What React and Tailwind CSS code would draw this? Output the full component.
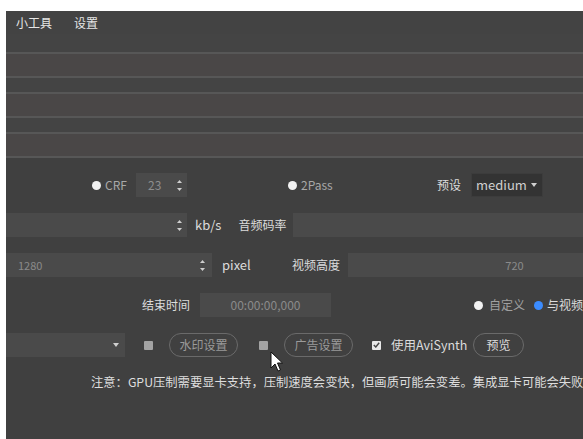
import React from "react";

const Spin = () => (
  <div className="flex flex-col gap-[5px] items-center">
    <svg width="5" height="3" viewBox="0 0 5 3">
      <path d="M0 3 L2.5 0 L5 3 Z" fill="#cfcfcf" />
    </svg>
    <svg width="5" height="3" viewBox="0 0 5 3">
      <path d="M0 0 L2.5 3 L5 0 Z" fill="#cfcfcf" />
    </svg>
  </div>
);

const Caret = () => (
  <svg width="6" height="4" viewBox="0 0 6 4">
    <path d="M0 0 L3 4 L6 0 Z" fill="#cfcfcf" />
  </svg>
);

const Dot = ({ blue, className = "" }) => (
  <span
    className={`shrink-0 w-[9px] h-[9px] rounded-full ${
      blue ? "bg-[#3b8cff]" : "bg-[#f2f2f2]"
    } ${className}`}
  />
);

const PillBtn = ({ children, className = "", light }) => (
  <button
    className={`shrink-0 h-6 rounded-full border border-[#6a6a6a] text-[12px] flex items-center justify-center ${
      light ? "text-[#dcdcdc]" : "text-[#9a9a9a]"
    } ${className}`}
  >
    {children}
  </button>
);

const Stripe = ({ h, light }) => (
  <>
    <div className={`${h} ${light ? "bg-[#4a4747]" : "bg-[#444444]"}`} />
    <div className="h-[2px] bg-[#575757]" />
  </>
);

export default function App() {
  return (
    <div className="bg-white h-[439px] w-[583px] pt-[11px] pl-[6px] font-['Noto_Sans_CJK_SC','Liberation_Sans',sans-serif] overflow-hidden">
      <div className="relative h-[428px] bg-[#404040] overflow-hidden text-[12px] text-[#dcdcdc]">
        {/* menu */}
        <div className="h-[23px] bg-[#434343] flex items-center text-[#e6e6e6]">
          <span className="ml-[10px]">小工具</span>
          <span className="ml-[22px]">设置</span>
        </div>

        {/* stripes */}
        <div className="flex flex-col">
          <Stripe h="h-[18px]" />
          <Stripe h="h-[22px]" light />
          <Stripe h="h-[14px]" />
          <Stripe h="h-[22px]" light />
          <Stripe h="h-[14px]" />
          <Stripe h="h-[22px]" light />
        </div>

        {/* row 1 */}
        <div className="mt-[15px] h-6 flex items-center whitespace-nowrap">
          <Dot className="ml-[86px]" />
          <span className="ml-[4px] w-[23px] text-[#a8a8a8]">CRF</span>
          <div className="ml-[8px] w-[51px] h-6 bg-[#4a4a4a] flex items-center justify-between pl-3 pr-[5px] text-[#8e8e8e]">
            <span>23</span>
            <Spin />
          </div>
          <Dot className="ml-[101px]" />
          <span className="ml-[4px] w-[34px] text-[#a8a8a8]">2Pass</span>
          <span className="ml-[102px] w-[24px]">预设</span>
          <div className="ml-[10px] w-[72px] h-6 bg-[#333333] border border-[#3c3c3c] flex items-center justify-between pl-[4px] pr-[5px] text-[13px] text-[#d0d0d0]">
            <span>medium</span>
            <Caret />
          </div>
        </div>

        {/* row 2 */}
        <div className="mt-4 h-6 flex items-center whitespace-nowrap">
          <div className="shrink-0 w-[181px] h-6 bg-[#4a4a4a] flex items-center justify-end pr-[5px]">
            <Spin />
          </div>
          <span className="ml-[8px] w-[28px] text-[13px]">kb/s</span>
          <span className="ml-[17px] w-[50px]">音频码率</span>
          <div className="ml-[7px] shrink-0 w-[300px] h-6 bg-[#4a4a4a]" />
        </div>

        {/* row 3 */}
        <div className="mt-4 h-6 flex items-center whitespace-nowrap">
          <div className="shrink-0 w-[206px] h-6 bg-[#4a4a4a] flex items-center justify-between pl-3 pr-[7px] text-[#8a8a8a] text-[11px]">
            <span>1280</span>
            <Spin />
          </div>
          <span className="ml-[10px] w-[28px] text-[13px]">pixel</span>
          <span className="ml-[42px] w-[50px]">视频高度</span>
          <div className="ml-[8px] shrink-0 w-[333px] h-6 bg-[#4a4a4a] flex items-center justify-center text-[#8a8a8a] text-[11px]">
            720
          </div>
        </div>

        {/* row 4 */}
        <div className="mt-4 h-6 flex items-center whitespace-nowrap">
          <span className="ml-[136px] w-[48px]">结束时间</span>
          <div className="ml-[10px] shrink-0 w-[131px] h-6 bg-[#4a4a4a] flex items-center justify-center text-[#8a8a8a]">
            00:00:00,000
          </div>
          <Dot className="ml-[143px]" />
          <span className="ml-[6px] w-[36px] text-[#a0a0a0]">自定义</span>
          <Dot blue className="ml-[9px]" />
          <span className="ml-[4px]">与视频</span>
        </div>

        {/* row 5 */}
        <div className="mt-4 h-6 flex items-center whitespace-nowrap">
          <div className="shrink-0 w-[119px] h-6 bg-[#4a4a4a] flex items-center justify-end pr-[6px]">
            <Caret />
          </div>
          <span className="ml-[19px] shrink-0 w-[9px] h-[9px] bg-[#a3a3a3] rounded-[1px]" />
          <PillBtn className="ml-[16px] w-[69px]">水印设置</PillBtn>
          <span className="ml-[21px] shrink-0 w-[9px] h-[9px] bg-[#a3a3a3] rounded-[1px]" />
          <PillBtn className="ml-[16px] w-[69px]">广告设置</PillBtn>
          <span className="ml-[19px] shrink-0 w-[9px] h-[9px] bg-[#e8e8e8] rounded-[1px] flex items-center justify-center">
            <svg width="7" height="6" viewBox="0 0 7 6">
              <path d="M0.8 3 L2.8 5 L6.2 0.8" fill="none" stroke="#444" strokeWidth="1.4" />
            </svg>
          </span>
          <span className="ml-[10px] w-[75px] text-[12.5px]">使用AviSynth</span>
          <PillBtn light className="ml-[7px] w-[51px]">预览</PillBtn>
        </div>

        {/* note */}
        <div className="mt-4 ml-[85px] whitespace-nowrap text-[12.3px] text-[#dedede]">
          注意：GPU压制需要显卡支持，压制速度会变快，但画质可能会变差。集成显卡可能会失败
        </div>

        {/* mouse cursor */}
        <svg
          className="absolute left-[264px] top-[340px]"
          width="14"
          height="22"
          viewBox="0 0 14 22"
        >
          <path
            d="M1 1 L1 17 L5 13 L8 20 L10.5 19 L7.5 12 L12.5 12 Z"
            fill="#ffffff"
            stroke="#111"
            strokeWidth="1"
            strokeLinejoin="round"
          />
        </svg>
      </div>
    </div>
  );
}
